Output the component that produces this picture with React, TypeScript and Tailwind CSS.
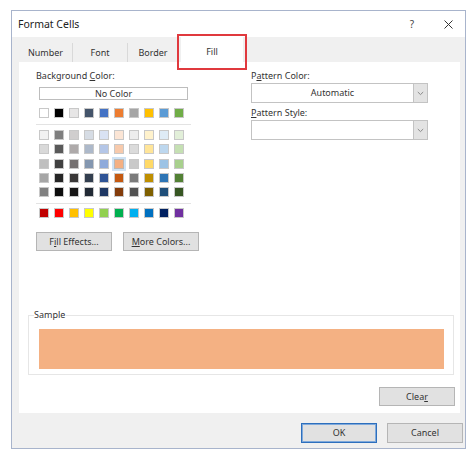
import React from "react";

const theme = [
  "#FFFFFF", "#000000", "#E7E6E6", "#44546A", "#4472C4",
  "#ED7D31", "#A5A5A5", "#FFC000", "#5B9BD5", "#70AD47",
];

const shades = [
  ["#F2F2F2", "#7F7F7F", "#D0CECE", "#D6DCE4", "#D9E2F3", "#FBE5D5", "#EDEDED", "#FFF2CC", "#DEEBF6", "#E2EFD9"],
  ["#D9D9D9", "#595959", "#AEAAAA", "#ADB9CA", "#B4C6E7", "#F7CAAC", "#DBDBDB", "#FFE599", "#BDD7EE", "#C5E0B3"],
  ["#BFBFBF", "#404040", "#757171", "#8497B0", "#8EAADB", "#F4B083", "#C9C9C9", "#FFD966", "#9CC3E5", "#A8D08D"],
  ["#A6A6A6", "#262626", "#3A3838", "#333F4F", "#2F5496", "#C45911", "#7B7B7B", "#BF8F00", "#2E75B5", "#538135"],
  ["#808080", "#0D0D0D", "#171616", "#222A35", "#1F3864", "#833C0B", "#525252", "#7F6000", "#1F4E79", "#375623"],
];

const standard = [
  "#C00000", "#FF0000", "#FFC000", "#FFFF00", "#92D050",
  "#00B050", "#00B0F0", "#0070C0", "#002060", "#7030A0",
];

function Swatch({ color, selected }: { color: string; selected?: boolean }) {
  return (
    <div
      className={
        selected
          ? "h-[10px] w-[10px] outline outline-2 outline-[#cfe3f5] border border-[#b9b9b9]"
          : "h-[10px] w-[10px] border border-[#c8c8c8]"
      }
      style={{ backgroundColor: color }}
    />
  );
}

function Btn({ children, className = "" }: { children: React.ReactNode; className?: string }) {
  return (
    <div
      className={
        "flex h-[19px] w-[76px] items-center justify-center border border-[#b5b5b5] bg-[#e1e1e1] text-[9px] text-[#333] " +
        className
      }
    >
      {children}
    </div>
  );
}

function Dropdown({ value }: { value?: string }) {
  return (
    <div className="flex h-[20px] w-[177px] border border-[#c3c3c3] bg-white">
      <div className="flex flex-1 items-center justify-center text-[9px] text-[#333]">{value}</div>
      <div className="flex w-[14px] items-center justify-center border-l border-[#c3c3c3] bg-[#e3e3e3]">
        <svg width="7" height="5" viewBox="0 0 7 5">
          <path d="M0.8 1 L3.5 3.6 L6.2 1" fill="none" stroke="#8a8a8a" strokeWidth="1" />
        </svg>
      </div>
    </div>
  );
}

export default function App() {
  return (
    <div
      className="relative h-[460px] w-[474px] overflow-hidden bg-white text-[#222]"
      style={{ fontFamily: '"Noto Sans", "Open Sans", sans-serif' }}
    >
      <div className="ml-[11px] mt-[10px] flex h-[439px] w-[455px] flex-col border border-[#a8b4cc] bg-[#f0f0f0]">
        {/* title bar */}
        <div className="flex h-[26px] items-center bg-white pl-[6px] pr-[12px] pt-[1px]">
          <span className="text-[10.5px] text-[#222]">Format Cells</span>
          <span className="ml-auto mr-[30px] text-[10px] text-[#444]">?</span>
          <svg width="9" height="9" viewBox="0 0 9 9">
            <path d="M0.5 0.5 L8.5 8.5 M8.5 0.5 L0.5 8.5" stroke="#333" strokeWidth="1" />
          </svg>
        </div>

        {/* tabs */}
        <div className="flex h-[25px] items-end pl-[7px] text-[9px] text-[#333]">
          <div className="flex h-[19px] w-[54px] items-center justify-center border-r border-[#d9d9d9]">Number</div>
          <div className="flex h-[19px] w-[55px] items-center justify-center border-r border-[#d9d9d9]">Font</div>
          <div className="flex h-[19px] w-[50px] items-center justify-center">Border</div>
          <div className="ml-[3px] flex h-[25px] w-[62px] items-center justify-center bg-white pt-[5px]">Fill</div>
        </div>

        {/* panel */}
        <div className="ml-[7px] flex h-[351px] w-[441px] flex-col bg-white text-[9px] text-[#333]">
          <div className="flex pt-[8px]">
            {/* left column */}
            <div className="flex w-[215px] flex-col pl-[17px]">
              <span className="leading-[11px]">
                Background <u>C</u>olor:
              </span>
              <div className="ml-[3px] mt-[6px] flex h-[13px] w-[149px] items-center justify-center border border-[#bdbdbd] leading-none">
                No Color
              </div>
              <div className="ml-[3px] mt-[8px] flex gap-[5px]">
                {theme.map((c) => (
                  <Swatch key={c} color={c} />
                ))}
              </div>
              <div className="mt-[6px] h-px w-[155px] bg-[#e3e3e3]" />
              <div className="ml-[3px] mt-[5px] flex flex-col gap-[4.3px]">
                {shades.map((row, i) => (
                  <div key={i} className="flex gap-[5px]">
                    {row.map((c, j) => (
                      <Swatch key={c} color={c} selected={i === 2 && j === 5} />
                    ))}
                  </div>
                ))}
              </div>
              <div className="mt-[6px] h-px w-[155px] bg-[#e3e3e3]" />
              <div className="ml-[3px] mt-[4px] flex gap-[5px]">
                {standard.map((c, i) => (
                  <Swatch key={i} color={c} />
                ))}
              </div>
              <div className="mt-[14px] flex gap-[11px]">
                <Btn>
                  F<u>i</u>ll Effects...
                </Btn>
                <Btn>
                  <u>M</u>ore Colors...
                </Btn>
              </div>
            </div>

            {/* right column */}
            <div className="flex flex-col pl-[17px]">
              <span className="leading-[11px]">
                P<u>a</u>ttern Color:
              </span>
              <div className="mt-[2px]">
                <Dropdown value="Automatic" />
              </div>
              <span className="mt-[4px] leading-[11px]">
                <u>P</u>attern Style:
              </span>
              <div className="mt-[2px]">
                <Dropdown />
              </div>
            </div>
          </div>

          {/* sample */}
          <div className="relative ml-[9px] mt-[64px] h-[60px] w-[426px] border border-[#e6e6e6]">
            <span className="absolute left-[5px] top-[-7px] bg-white pr-[1px] leading-[11px]">Sample</span>
            <div className="ml-[10px] mt-[13px] h-[40px] w-[405px] bg-[#F4B183]" />
          </div>

          <div className="mt-[12px] flex justify-end pr-[5px]">
            <Btn>
              Clea<u>r</u>
            </Btn>
          </div>
        </div>

        {/* footer */}
        <div className="flex flex-1 items-start justify-end gap-[10px] pr-[2px] pt-[10px]">
          <Btn className="!h-[20px] !border-[#2d6fbd] outline outline-1 outline-[#7fa9db] -outline-offset-2">OK</Btn>
          <Btn className="!h-[20px]">Cancel</Btn>
        </div>
      </div>

      {/* highlight around Fill tab */}
      <div className="absolute left-[177px] top-[34px] h-[36px] w-[70px] border-2 border-[#e0393e]" />
    </div>
  );
}
